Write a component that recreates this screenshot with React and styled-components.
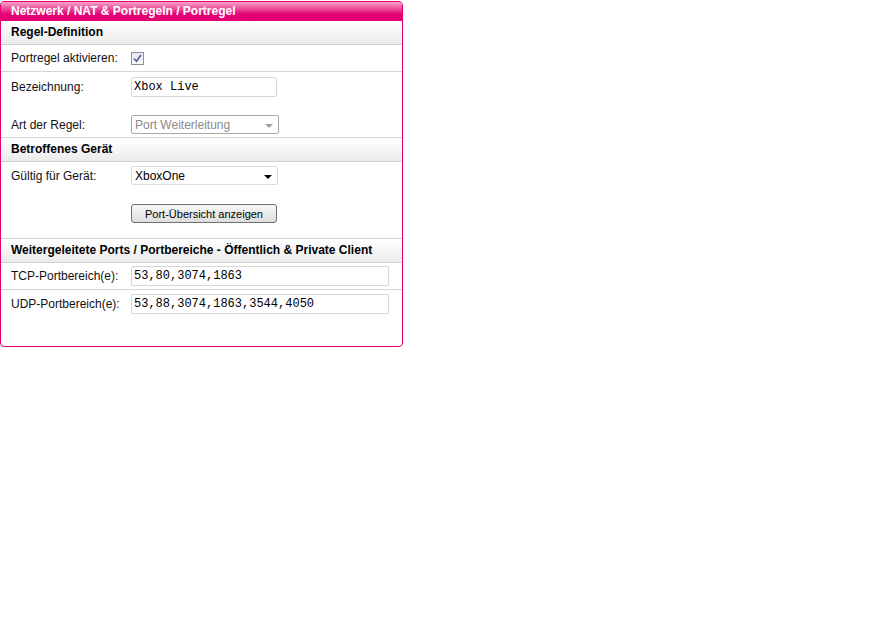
import React from 'react';
import styled, { createGlobalStyle } from 'styled-components';

const GlobalStyle = createGlobalStyle`
  body {
    margin: 0;
    background: #fff;
    font-family: "Liberation Sans", Arial, sans-serif;
    font-size: 12px;
    color: #000;
  }
`;

const Page = styled.div`
  padding-top: 1px;
`;

const Panel = styled.div`
  width: 401px;
  height: 344px;
  border: 1px solid #e20074;
  border-radius: 4px;
  overflow: hidden;
  background: #fff;
`;

const TitleBar = styled.div`
  height: 19px;
  line-height: 18px;
  padding-left: 10px;
  color: #fff;
  font-weight: bold;
  background: linear-gradient(to bottom, #f7a3cb 0%, #ee5aa0 30%, #e20074 65%, #e20074 100%);
`;

const SectionHead = styled.div`
  height: 23px;
  line-height: 23px;
  padding-left: 10px;
  font-weight: bold;
  border-top: ${p => (p.$top ? '1px solid #d4d4d4' : 'none')};
  border-bottom: 1px solid #cfcfcf;
  background: linear-gradient(to bottom, #ffffff 0%, #f6f6f6 50%, #ebebeb 100%);
`;

const Row = styled.div`
  display: grid;
  grid-template-columns: 120px 1fr;
  align-items: center;
  height: ${p => p.$h}px;
  padding-left: 10px;
  padding-top: ${p => p.$pt || 0}px;
  border-bottom: ${p => (p.$line ? '1px solid #d4d4d4' : 'none')};
`;

const Label = styled.span`
  color: #111;
`;

const TextInput = styled.div`
  box-sizing: border-box;
  width: ${p => p.$w}px;
  height: 20px;
  border: 1px solid #d6d6d6;
  border-radius: 2px;
  padding: 0 2px;
  line-height: 18px;
  font-family: "Liberation Mono", "Courier New", monospace;
  font-size: 12px;
  color: #000;
  background: #fff;
`;

const Select = styled.div`
  box-sizing: border-box;
  width: ${p => p.$w}px;
  height: 19px;
  display: flex;
  align-items: center;
  justify-content: space-between;
  padding: 0 4px 0 3px;
  border: 1px solid ${p => (p.$disabled ? '#a8a8a8' : '#dcdcdc')};
  border-radius: 2px;
  color: ${p => (p.$disabled ? '#8a8a8a' : '#000')};
  background: #fff;
`;

const Arrow = styled.span`
  width: 0;
  height: 0;
  border-left: 4px solid transparent;
  border-right: 4px solid transparent;
  border-top: 4px solid ${p => (p.$disabled ? '#a0a0a0' : '#000')};
  margin-top: 2px;
  margin-right: 1px;
`;

const Checkbox = styled.span`
  box-sizing: border-box;
  width: 13px;
  height: 13px;
  border: 1px solid #8f8f9d;
  background: linear-gradient(to bottom, #e6e6ee, #fafafc);
  display: flex;
  align-items: center;
  justify-content: center;
`;

const Button = styled.button`
  box-sizing: border-box;
  width: 146px;
  height: 19px;
  padding: 0;
  border: 1px solid #707070;
  border-radius: 3px;
  font-family: "Liberation Sans", Arial, sans-serif;
  font-size: 11px;
  color: #000;
  background: linear-gradient(to bottom, #f6f6f6 0%, #ebebeb 50%, #dddddd 100%);
`;

export default function App() {
  return (
    <Page>
      <GlobalStyle />
      <Panel>
        <TitleBar>Netzwerk / NAT &amp; Portregeln / Portregel</TitleBar>

        <SectionHead>Regel-Definition</SectionHead>
        <Row $h={26} $line>
          <Label>Portregel aktivieren:</Label>
          <Checkbox>
            <svg width="9" height="9" viewBox="0 0 9 9">
              <path d="M1 4.5 L3.5 7.2 L8 1" fill="none" stroke="#4a5f9c" strokeWidth="1.6" />
            </svg>
          </Checkbox>
        </Row>
        <Row $h={29}>
          <Label>Bezeichnung:</Label>
          <TextInput $w={146}>Xbox Live</TextInput>
        </Row>
        <Row $h={25} $pt={11}>
          <Label>Art der Regel:</Label>
          <Select $w={148} $disabled>
            Port Weiterleitung
            <Arrow $disabled />
          </Select>
        </Row>

        <SectionHead $top>Betroffenes Gerät</SectionHead>
        <Row $h={27}>
          <Label>Gültig für Gerät:</Label>
          <Select $w={147}>
            XboxOne
            <Arrow />
          </Select>
        </Row>
        <Row $h={49} $line>
          <span />
          <Button>Port-Übersicht anzeigen</Button>
        </Row>

        <SectionHead>Weitergeleitete Ports / Portbereiche - Öffentlich &amp; Private Client</SectionHead>
        <Row $h={26} $line>
          <Label>TCP-Portbereich(e):</Label>
          <TextInput $w={258}>53,80,3074,1863</TextInput>
        </Row>
        <Row $h={28}>
          <Label>UDP-Portbereich(e):</Label>
          <TextInput $w={258}>53,88,3074,1863,3544,4050</TextInput>
        </Row>
      </Panel>
    </Page>
  );
}
